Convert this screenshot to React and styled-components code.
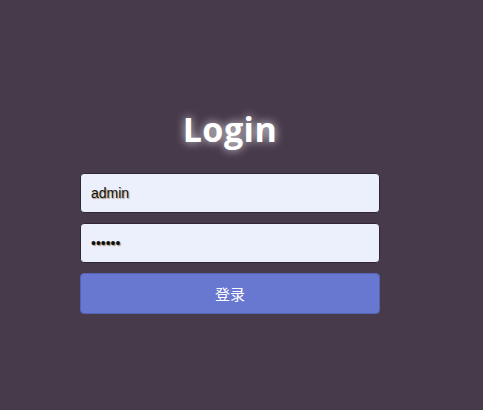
import React from "react";
import styled, { createGlobalStyle } from "styled-components";

const GlobalStyle = createGlobalStyle`
  html, body {
    margin: 0;
    padding: 0;
    background: #473a4b;
  }
  * { box-sizing: border-box; }
`;

const Page = styled.div`
  width: 483px;
  height: 410px;
  background: #473a4b;
  padding-top: 105px;
  padding-left: 80px;
`;

const LoginBox = styled.div`
  width: 300px;
  display: flex;
  flex-direction: column;
  gap: 10px;
`;

const Title = styled.h1`
  margin: 0 0 10px 0;
  text-align: center;
  font-family: "Open Sans", "Noto Sans", sans-serif;
  font-weight: 700;
  font-size: 34px;
  line-height: 48px;
  color: #fff;
  letter-spacing: 0.5px;
  text-shadow: 0 0 10px rgba(255, 255, 255, 0.85);
`;

const Input = styled.input`
  width: 300px;
  height: 40px;
  padding: 0 10px;
  border: 1px solid #2f2634;
  border-radius: 4px;
  background: #ecf0fc;
  font-family: "Liberation Sans", Arial, sans-serif;
  font-size: 14px;
  color: #111;
  outline: none;
  text-shadow: 1px 1px 1px rgba(120, 90, 40, 0.6);
`;

const Button = styled.button`
  width: 300px;
  height: 41px;
  border: 1px solid #5463b8;
  border-radius: 4px;
  background: #6878d0;
  color: #fff;
  font-family: "Noto Sans CJK SC", "Noto Sans", sans-serif;
  font-size: 15px;
  cursor: pointer;
`;

export default function App() {
  return (
    <>
      <GlobalStyle />
      <Page>
        <LoginBox>
          <Title>Login</Title>
          <Input type="text" defaultValue="admin" />
          <Input type="password" defaultValue="123456" />
          <Button>登录</Button>
        </LoginBox>
      </Page>
    </>
  );
}
